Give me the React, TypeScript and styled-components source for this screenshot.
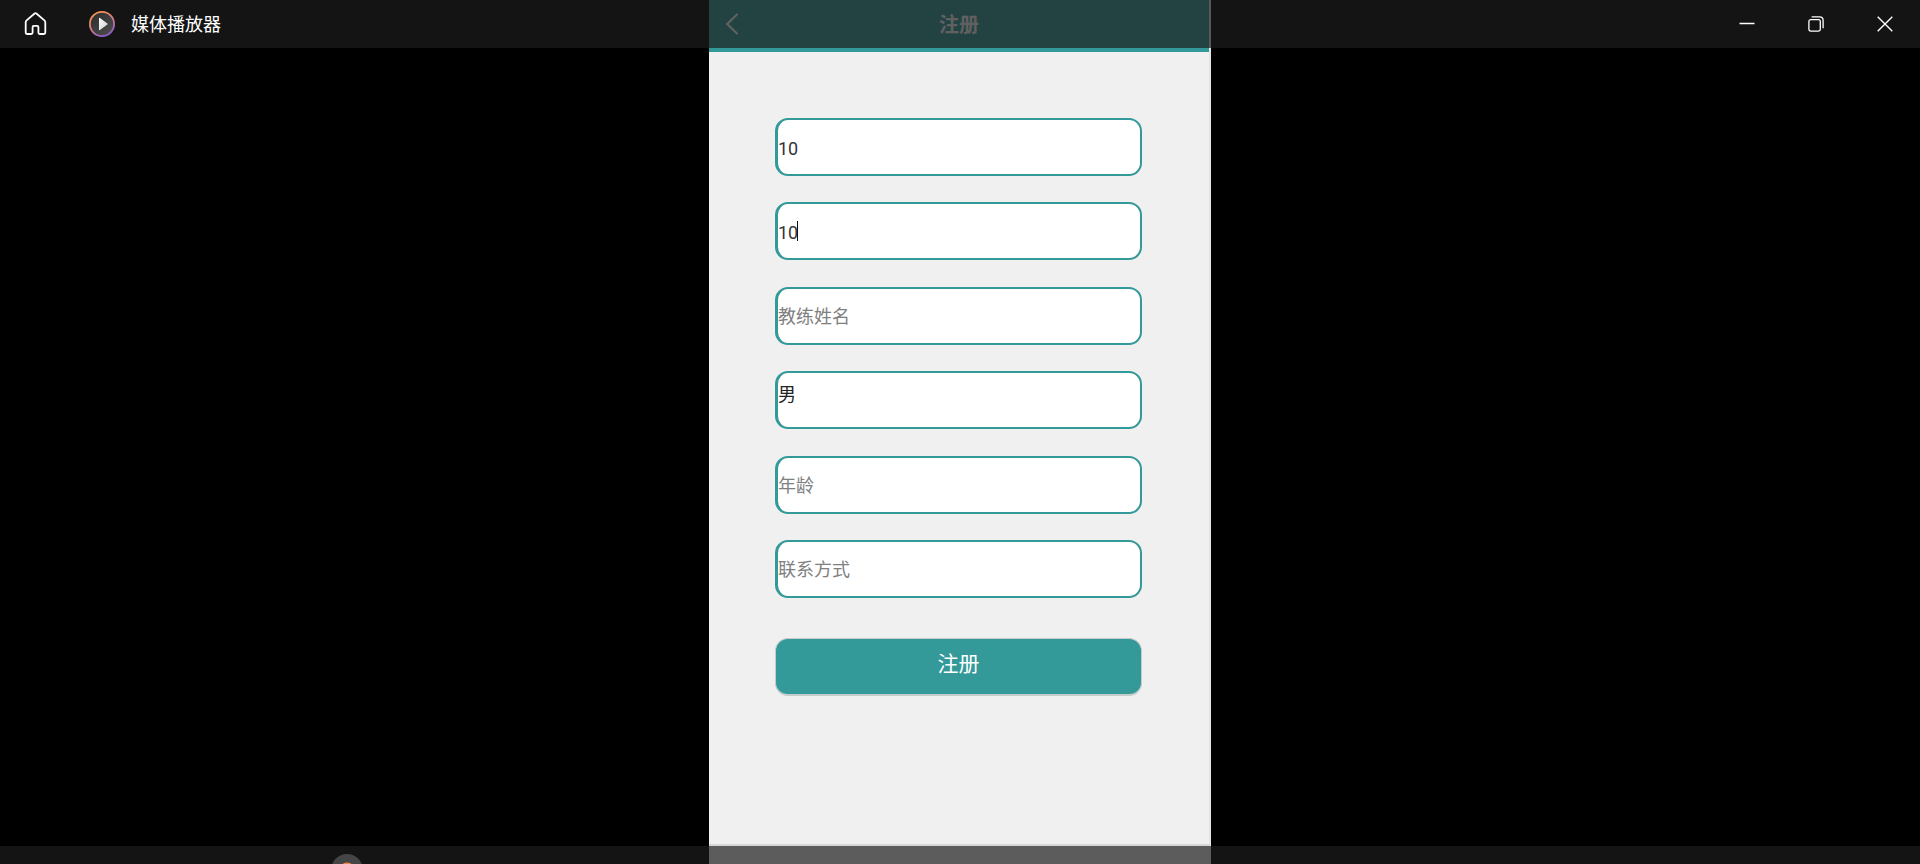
import React, { useState } from "react";
import styled, { createGlobalStyle } from "styled-components";

const sans = `Roboto, "Liberation Sans", "Noto Sans CJK SC", sans-serif`;
const teal = "#339999";
const glass = "rgba(29, 29, 29, 0.7)";

const GlobalStyle = createGlobalStyle`
  *, *::before, *::after { box-sizing: border-box; }
  html, body, #root { height: 100%; }
  body { margin: 0; background: #000; font-family: ${sans}; overflow: hidden; }
  button, input, select { font: inherit; }
`;

const Player = styled.main`
  position: relative;
  height: 100%;
  display: flex;
  justify-content: center;
  overflow: hidden;
  background: #000;
`;

const TitleBar = styled.header`
  position: absolute;
  top: 0;
  left: 0;
  right: 0;
  height: 48px;
  display: flex;
  align-items: center;
  justify-content: space-between;
  background: ${glass};
  color: #fff;
`;

const Brand = styled.div`
  display: flex;
  align-items: center;
  padding-left: 20px;
`;

const AppName = styled.h1`
  margin: 0 0 0 16px;
  padding-top: 2px;
  font-size: 18px;
  line-height: 24px;
  font-weight: 400;
`;

const IconButton = styled.button<{ $width: number }>`
  width: ${(p) => p.$width}px;
  height: 48px;
  padding: 0;
  border: 0;
  background: transparent;
  color: #fff;
  display: flex;
  align-items: center;
  justify-content: center;
`;

const HomeButton = styled(IconButton)`
  margin-right: 37px;
`;

const WindowControls = styled.div`
  display: flex;
  padding-right: 1px;
`;

const Transport = styled.footer`
  position: absolute;
  left: 0;
  right: 0;
  bottom: 0;
  height: 18px;
  padding-top: 8px;
  overflow: hidden;
  background: ${glass};
`;

const Seek = styled.input`
  appearance: none;
  display: block;
  width: 100%;
  height: 32px;
  margin: 0;
  background: transparent;
  outline: none;

  &::-webkit-slider-thumb {
    appearance: none;
    width: 32px;
    height: 32px;
    border-radius: 50%;
    background: radial-gradient(circle, #f0824a 0 7px, #454545 8px);
  }
`;

const Screen = styled.section`
  width: 502px;
  max-width: 100%;
  height: calc(100% - 18px);
  box-shadow: 0 18px #f0f0f0;
  background: #f0f0f0;
  border-right: 2px solid #e4e4e4;
  border-bottom: 2px solid #d6d6d6;
`;

const NavBar = styled.nav`
  height: 52px;
  padding: 0 16px 4px;
  display: grid;
  grid-template-columns: 20px 1fr 20px;
  align-items: center;
  background: ${teal};
  color: #fff;
`;

const BackButton = styled(IconButton)`
  justify-content: flex-start;
`;

const NavTitle = styled.h2`
  margin: 0;
  padding-top: 2px;
  text-align: center;
  font-size: 20px;
  line-height: 24px;
  font-weight: 700;
`;

const Form = styled.form`
  padding: 66px 67px 0 66px;
`;

const Fields = styled.div`
  min-height: 480px;
  display: flex;
  flex-direction: column;
  justify-content: space-between;
`;

const Field = styled.div`
  position: relative;
  height: 58px;
  border: 2px solid ${teal};
  border-left-width: 3px;
  border-radius: 13px;
  background: #fff;
  overflow: hidden;
`;

const TextInput = styled.input`
  width: 100%;
  height: 100%;
  padding: 2px 0 0;
  border: 0;
  outline: none;
  background: transparent;
  color: #333;
  font-size: 18px;
  &::placeholder { color: #808080; opacity: 1; }
`;

const Choice = styled.select`
  appearance: none;
  width: 100%;
  height: 100%;
  padding: 0 0 12px;
  border: 0;
  outline: none;
  background: transparent;
  color: #222;
  font-size: 18px;
`;

const Caret = styled.i`
  position: absolute;
  left: 19px;
  top: 17px;
  width: 1px;
  height: 20px;
  background: #111;
`;

const Submit = styled.button`
  display: block;
  width: 100%;
  height: 58px;
  margin-top: 40px;
  padding: 0 0 10px;
  border: 1px solid #c4cccc;
  border-bottom-width: 2px;
  border-radius: 13px;
  background: ${teal};
  color: #fff;
  font-size: 21px;
`;

type Entry = { label: string; value?: string; choices?: string[]; caret?: boolean };

const entries: Entry[] = [
  { label: "账号", value: "10" },
  { label: "密码", value: "10", caret: true },
  { label: "教练姓名" },
  { label: "性别", choices: ["男", "女"] },
  { label: "年龄" },
  { label: "联系方式" },
];

const HomeIcon = () => (
  <svg width="24" height="26" viewBox="0 0 24 26" fill="none" stroke="currentColor" strokeWidth="1.8" strokeLinejoin="round">
    <path d="M10.6 2.5 2.6 9.4Q1.7 10.2 1.7 11.4V21.2Q1.7 23 3.5 23H7.2Q8.6 23 8.6 21.6V16Q8.6 14.8 9.8 14.8H13.2Q14.4 14.8 14.4 16V21.6Q14.4 23 15.8 23H19.5Q21.3 23 21.3 21.2V11.4Q21.3 10.2 20.4 9.4L12.4 2.5Q11.5 1.8 10.6 2.5Z" />
  </svg>
);

const PlayerLogo = () => (
  <svg width="26" height="26" viewBox="0 0 26 26" aria-hidden="true">
    <defs>
      <linearGradient id="ring" x1="0.2" y1="0" x2="0.7" y2="1">
        <stop offset="0" stopColor="#ff9a4a" />
        <stop offset="0.5" stopColor="#d8788a" />
        <stop offset="1" stopColor="#8a5bd0" />
      </linearGradient>
      <linearGradient id="disc" x1="0" y1="0" x2="1" y2="1">
        <stop offset="0" stopColor="#2c2c2c" />
        <stop offset="1" stopColor="#505050" />
      </linearGradient>
      <linearGradient id="tri" x1="0" y1="0" x2="1" y2="1">
        <stop offset="0" stopColor="#fff" />
        <stop offset="1" stopColor="#cfcfcf" />
      </linearGradient>
    </defs>
    <circle cx="13" cy="13" r="12.1" fill="url(#disc)" stroke="url(#ring)" strokeWidth="1.8" />
    <path d="M10 7.4Q10 6.3 10.9 7L18.4 12.4Q19.2 13 18.4 13.6L10.9 19Q10 19.7 10 18.6Z" fill="url(#tri)" />
  </svg>
);

export default function App() {
  const [position, setPosition] = useState(1753);

  return (
    <>
      <GlobalStyle />
      <Player>
        <Screen>
          <NavBar>
            <BackButton $width={20} aria-label="返回">
              <svg width="14" height="22" viewBox="0 0 14 22" fill="none" stroke="currentColor" strokeWidth="2.2">
                <path d="M12.5 1 2.2 11 12.5 21" />
              </svg>
            </BackButton>
            <NavTitle>注册</NavTitle>
          </NavBar>
          <Form onSubmit={(e) => e.preventDefault()}>
            <Fields>
              {entries.map(({ label, value, choices, caret }) => (
                <Field key={label}>
                  {choices ? (
                    <Choice aria-label={label}>
                      {choices.map((c) => (
                        <option key={c}>{c}</option>
                      ))}
                    </Choice>
                  ) : (
                    <TextInput aria-label={label} defaultValue={value} placeholder={value ? undefined : label} />
                  )}
                  {caret && <Caret />}
                </Field>
              ))}
            </Fields>
            <Submit type="submit">注册</Submit>
          </Form>
        </Screen>

        <TitleBar>
          <Brand>
            <HomeButton $width={32} aria-label="主页">
              <HomeIcon />
            </HomeButton>
            <PlayerLogo />
            <AppName>媒体播放器</AppName>
          </Brand>
          <WindowControls>
            <IconButton $width={69} aria-label="最小化">
              <svg width="16" height="16" viewBox="0 0 16 16">
                <path d="M0.5 7.5H15.5" stroke="currentColor" strokeWidth="1.5" />
              </svg>
            </IconButton>
            <IconButton $width={69} aria-label="还原">
              <svg width="16" height="16" viewBox="0 0 16 16" fill="none" stroke="currentColor" strokeWidth="1.3">
                <rect x="0.9" y="3.7" width="11.4" height="11.4" rx="1.8" />
                <path d="M3.6 0.9H11.6Q15.1 0.9 15.1 4.4V12.2" />
              </svg>
            </IconButton>
            <IconButton $width={69} aria-label="关闭">
              <svg width="16" height="16" viewBox="0 0 16 16" stroke="currentColor" strokeWidth="1.4">
                <path d="M0.7 0.7 15.3 15.3M15.3 0.7 0.7 15.3" />
              </svg>
            </IconButton>
          </WindowControls>
        </TitleBar>

        <Transport>
          <Seek
            type="range"
            aria-label="播放进度"
            min={0}
            max={10000}
            value={position}
            onChange={(e) => setPosition(Number(e.target.value))}
          />
        </Transport>
      </Player>
    </>
  );
}
